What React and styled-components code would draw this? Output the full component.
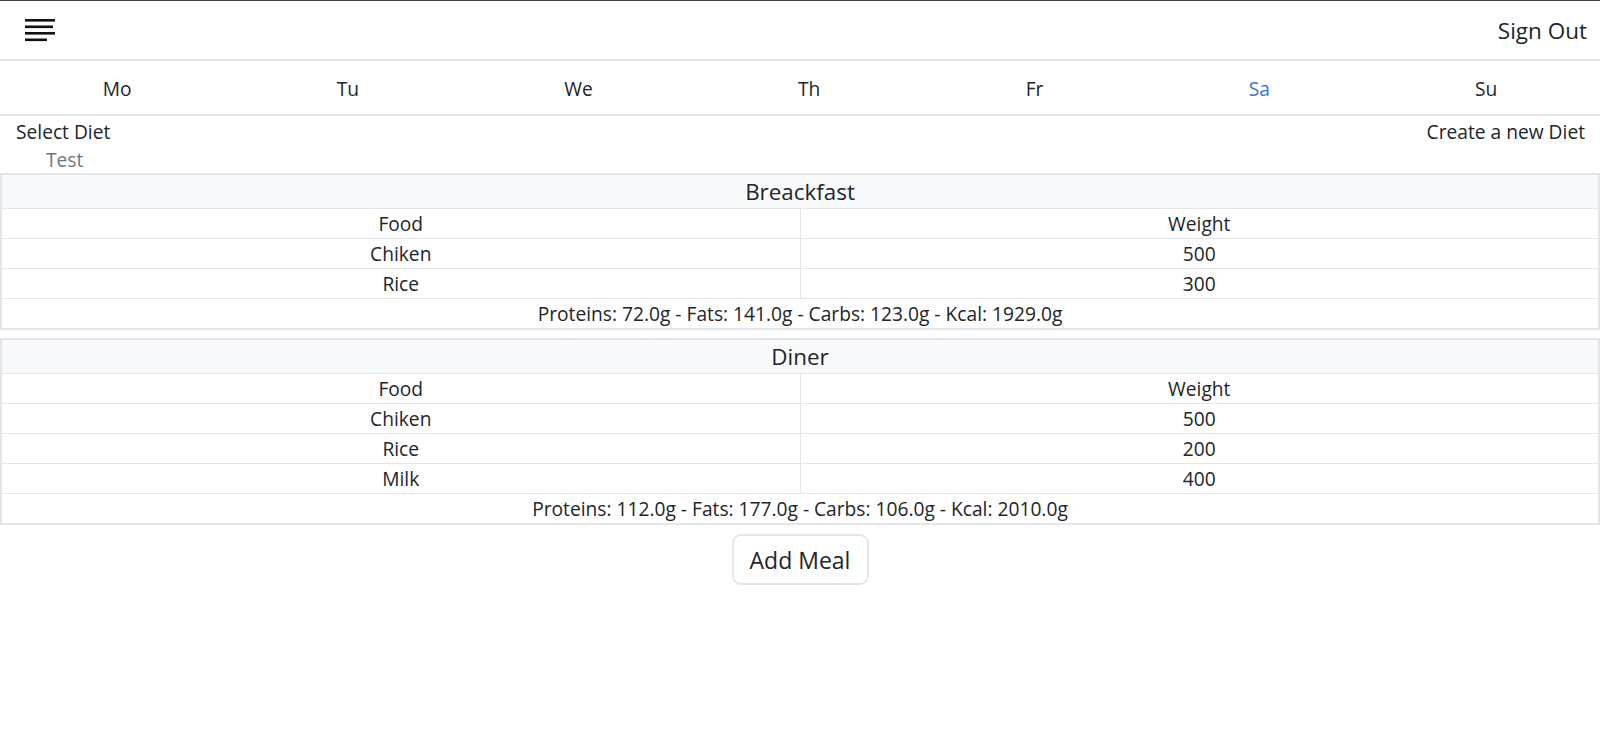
import React from 'react';
import styled, { createGlobalStyle } from 'styled-components';

const GlobalStyle = createGlobalStyle`
  body {
    margin: 0;
    background: #fff;
    color: #212529;
    font-family: "Segoe UI", "Open Sans", "Noto Sans", sans-serif;
  }
`;

const days = ['Mo', 'Tu', 'We', 'Th', 'Fr', 'Sa', 'Su'];

const meals = [
    {
        id: 1,
        name: 'Breackfast',
        foods: [
            { name: 'Chiken', weight: 500 },
            { name: 'Rice', weight: 300 },
        ],
        summary: 'Proteins: 72.0g - Fats: 141.0g - Carbs: 123.0g - Kcal: 1929.0g',
    },
    {
        id: 2,
        name: 'Diner',
        foods: [
            { name: 'Chiken', weight: 500 },
            { name: 'Rice', weight: 200 },
            { name: 'Milk', weight: 400 },
        ],
        summary: 'Proteins: 112.0g - Fats: 177.0g - Carbs: 106.0g - Kcal: 2010.0g',
    },
];

function MenuIcon() {
    return (
        <svg width="31" height="24" viewBox="0 0 31 24">
            <g fill="#111">
                <rect x="0" y="1" width="30" height="2.6" />
                <rect x="0" y="7.5" width="28" height="2.6" />
                <rect x="0" y="14" width="30" height="2.6" />
                <rect x="0" y="20.5" width="22" height="2.6" />
            </g>
        </svg>
    );
}

function MealTable({ meal }) {
    return (
        <Table>
            <thead>
                <tr>
                    <HeadCell colSpan={2}>{meal.name}</HeadCell>
                </tr>
            </thead>
            <tbody>
                <tr>
                    <td>Food</td>
                    <td>Weight</td>
                </tr>
                {meal.foods.map((food) => (
                    <tr key={food.name}>
                        <td>{food.name}</td>
                        <td>{food.weight}</td>
                    </tr>
                ))}
                <tr>
                    <td colSpan={2}>{meal.summary}</td>
                </tr>
            </tbody>
        </Table>
    );
}

export default function App() {
    return (
        <Page>
            <GlobalStyle />
            <Header>
                <MenuButton>
                    <MenuIcon />
                </MenuButton>
                <SignOut>Sign Out</SignOut>
            </Header>

            <DayNav>
                {days.map((day) => (
                    <Day key={day} active={day === 'Sa'}>{day}</Day>
                ))}
            </DayNav>

            <DietBar>
                <DietSelect>
                    <span>Select Diet</span>
                    <DietOption>Test</DietOption>
                </DietSelect>
                <span>Create a new Diet</span>
            </DietBar>

            <Meals>
                {meals.map((meal) => (
                    <MealTable key={meal.id} meal={meal} />
                ))}
            </Meals>

            <Actions>
                <AddButton>Add Meal</AddButton>
            </Actions>
        </Page>
    );
}

const Page = styled.div`
border-top: 1px solid #444;
min-height: 740px;
`;

const Header = styled.header`
height: 58px;
display: flex;
align-items: center;
justify-content: space-between;
padding: 0 13px 0 25px;
border-bottom: 2px solid #e3e5e8;
`;

const MenuButton = styled.div`
display: flex;
align-items: center;
margin-top: -1px;
`;

const SignOut = styled.span`
font-size: 22.5px;
`;

const DayNav = styled.nav`
display: flex;
align-items: center;
height: 53px;
border-bottom: 2px solid #e3e5e8;
`;

const Day = styled.span`
flex: 1 1 auto;
text-align: center;
font-size: 19.2px;
padding-top: 1px;
color: ${(p) => (p.active ? '#3d6fd9' : '#212529')};
`;

const DietBar = styled.div`
display: flex;
justify-content: space-between;
align-items: flex-start;
padding: 2px 15px 0 16px;
height: 55px;
font-size: 19.2px;
line-height: 27px;
`;

const DietSelect = styled.div`
display: flex;
flex-direction: column;
`;

const DietOption = styled.span`
color: #6c757d;
padding-left: 30px;
margin-top: 1px;
`;

const Meals = styled.div`
display: flex;
flex-direction: column;
gap: 8px;
`;

const Table = styled.table`
width: 100%;
border-collapse: collapse;
border: 2px solid #e3e5e8;

td {
    width: 50%;
    border: 1px solid #e3e5e8;
    padding: 0;
    height: 29px;
    text-align: center;
    font-size: 19.2px;
    line-height: 28px;
}
`;

const HeadCell = styled.th`
background: #f8f9fa;
border: 1px solid #e3e5e8;
font-weight: normal;
font-size: 22.4px;
height: 33px;
padding: 0;
`;

const Actions = styled.div`
display: flex;
justify-content: center;
padding-top: 9px;
`;

const AddButton = styled.button`
font-family: inherit;
font-size: 23px;
color: #212529;
background: #fff;
border: 2px solid #e3e5e8;
border-radius: 9px;
width: 137px;
height: 51px;
padding: 0;
`;
